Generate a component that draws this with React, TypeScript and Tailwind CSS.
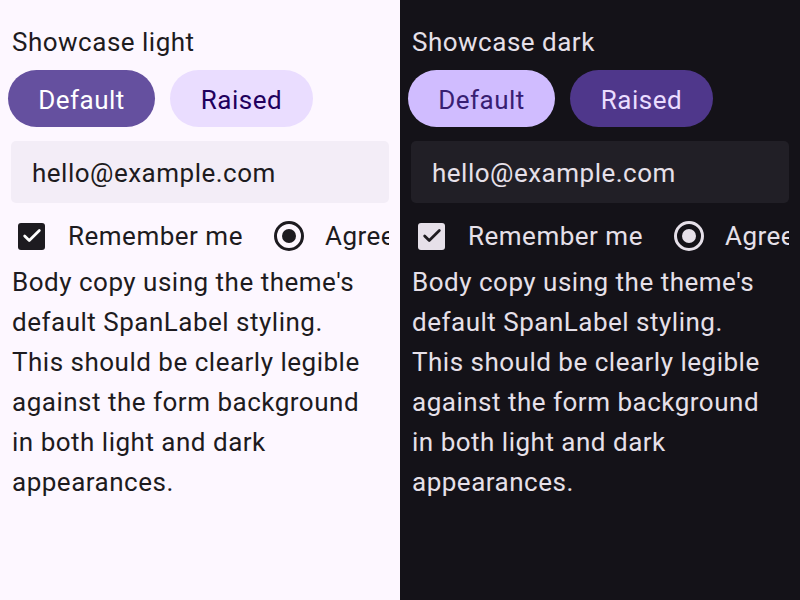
import { Check } from "lucide-react";

type Theme = "light" | "dark";

const styles = {
  light: {
    panel: "bg-[#fdf7ff] text-[#1d1b20]",
    primary: "bg-[#65509f] text-white",
    tonal: "bg-[#eaddff] text-[#21005d]",
    field: "bg-[#f3edf7]",
    box: "bg-[#1d1b20] text-white",
    radio: "border-[#1d1b20]",
    dot: "bg-[#1d1b20]",
  },
  dark: {
    panel: "bg-[#141218] text-[#e6e0e9]",
    primary: "bg-[#d0bcff] text-[#381e72]",
    tonal: "bg-[#4f378b] text-[#eaddff]",
    field: "bg-[#211f26]",
    box: "bg-[#e6e0e9] text-[#1d1b20]",
    radio: "border-[#e6e0e9]",
    dot: "bg-[#e6e0e9]",
  },
};

const Showcase = ({ theme }: { theme: Theme }) => {
  const s = styles[theme];

  return (
    <div className={`w-1/2 h-full px-[11px] pt-[24px] overflow-hidden text-[26px] tracking-[0.5px] ${s.panel}`}>
      <p className="leading-[36px] pl-px">Showcase {theme}</p>

      {/* Botones */}
      <div className="flex gap-[15px] mt-[10px] -ml-[3px]">
        <button className={`w-[147px] h-[57px] pt-[3px] rounded-full ${s.primary}`}>
          Default
        </button>
        <button className={`w-[143px] h-[57px] pt-[3px] rounded-full ${s.tonal}`}>
          Raised
        </button>
      </div>

      {/* Campo de texto */}
      <div className={`mt-[14px] h-[62px] pt-[3px] rounded-[5px] flex items-center pl-[21px] ${s.field}`}>
        hello@example.com
      </div>

      {/* Checkbox + radio (la fila se corta en el borde, como en el original) */}
      <div className="flex items-center h-[54px] mt-[6px] whitespace-nowrap overflow-hidden">
        <span className={`ml-[7px] w-[27px] h-[27px] shrink-0 rounded-[3px] flex items-center justify-center ${s.box}`}>
          <Check size={22} strokeWidth={3} />
        </span>
        <span className="ml-[23px]">Remember me</span>
        <span className={`ml-[31px] w-[30px] h-[30px] rounded-full border-[3px] flex items-center justify-center shrink-0 ${s.radio}`}>
          <span className={`w-[14px] h-[14px] rounded-full ${s.dot}`} />
        </span>
        <span className="ml-[21px]">Agree</span>
      </div>

      <p className="leading-[40px] pl-px pr-[20px] -mt-px">
        Body copy using the theme's default SpanLabel styling. This should be
        clearly legible against the form background in both light and dark
        appearances.
      </p>
    </div>
  );
};

export default function App() {
  return (
    <div className="w-[800px] h-[600px] flex font-['Roboto',sans-serif]">
      <Showcase theme="light" />
      <Showcase theme="dark" />
    </div>
  );
}
